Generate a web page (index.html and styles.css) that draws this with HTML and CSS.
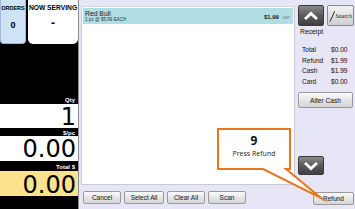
FILE: index.html
```html
<!DOCTYPE html>
<html>
<head>
<meta charset="utf-8">
<link rel="stylesheet" href="styles.css">
</head>
<body>
<div class="app">
  <aside class="side">
    <div class="top">
      <div class="orders"><div class="lbl">ORDERS</div><div class="val">0</div></div>
      <div class="serving"><div class="lbl">NOW SERVING</div><div class="val">-</div></div>
    </div>
    <div class="fill"></div>
    <div class="cap">Qty</div>
    <div class="num">1</div>
    <div class="cap">$/pc</div>
    <div class="num">0.00</div>
    <div class="cap">Total $</div>
    <div class="num total">0.00</div>
    <div class="foot"></div>
  </aside>
  <main class="main">
    <section class="left">
      <div class="list">
        <div class="row">
          <div class="item">
            <div class="name">Red Bull</div>
            <div class="detail">1 pc @ $5.99 EACH</div>
          </div>
          <div class="price">$1.99 <span class="tax">GST</span></div>
        </div>
      </div>
      <div class="actions">
        <button class="btn w38">Cancel</button>
        <button class="btn w40">Select All</button>
        <button class="btn w38">Clear All</button>
        <button class="btn w38">Scan</button>
      </div>
    </section>
    <section class="right">
      <div class="topbtns">
        <button class="dark"><svg width="16" height="10" viewBox="0 0 16 10"><polyline points="2,8 8,2.5 14,8" fill="none" stroke="#fff" stroke-width="3"/></svg></button>
        <button class="search"><svg width="8" height="14" viewBox="0 0 8 14"><line x1="1" y1="13" x2="6" y2="2" stroke="#222" stroke-width="1"/></svg><span>Search</span></button>
      </div>
      <div class="receipt">Receipt</div>
      <div class="totals">
        <div class="tl">Total</div><div class="tv">$0.00</div>
        <div class="tl">Refund</div><div class="tv">$1.99</div>
        <div class="tl">Cash</div><div class="tv">$1.99</div>
        <div class="tl">Card</div><div class="tv">$0.00</div>
      </div>
      <button class="btn alter">Alter Cash</button>
      <div class="grow"></div>
      <button class="dark down"><svg width="16" height="10" viewBox="0 0 16 10"><polyline points="2,2 8,7.5 14,2" fill="none" stroke="#fff" stroke-width="3"/></svg></button>
      <button class="btn refund">Refund</button>
    </section>
  </main>
  <div class="callout">
    <svg class="shape" width="355" height="209" viewBox="0 0 355 209">
      <path d="M218,129 H290 V169 H286 L321,198 L263,169 H218 Z" fill="#fff" stroke="#e8761c" stroke-width="2" stroke-linejoin="miter" stroke-miterlimit="10"/>
    </svg>
    <div class="bubble">
      <div class="step">9</div>
      <div class="msg">Press Refund</div>
    </div>
  </div>
</div>
</body>
</html>
```
FILE: styles.css
```css
* { box-sizing: border-box; }
html, body { margin: 0; padding: 0; }
body { width: 355px; height: 209px; overflow: hidden; font-family: "Liberation Sans", Arial, sans-serif; }
.app { position: relative; display: flex; width: 355px; height: 209px; }

.side { width: 79px; background: #000; display: flex; flex-direction: column; border-right: 1px solid #8c8c98; }
.top { display: flex; height: 44px; gap: 2px; }
.orders { width: 26px; background: #cfe3f7; border-radius: 0 0 4px 4px; border: 1px solid #9fb9d6; border-top: 0; text-align: center; }
.serving { flex: 1; background: #fff; border-radius: 0 0 5px 5px; text-align: center; }
.orders .lbl { font-size: 5.6px; font-weight: bold; margin-top: 5px; letter-spacing: -0.1px; }
.serving .lbl { font-size: 6.7px; font-weight: bold; margin-top: 4px; }
.orders .val { font-size: 9px; font-weight: bold; margin-top: 9px; }
.serving .val { font-size: 12px; font-weight: bold; margin-top: 5px; }
.fill { flex: 1; }
.cap { height: 10px; color: #fff; font-size: 6px; font-weight: bold; text-align: right; padding-right: 3px; line-height: 13px; }
.num { height: 24px; background: #fff; text-align: right; font-family: "DejaVu Sans", sans-serif; font-size: 24px; line-height: 27px; padding-right: 2px; color: #000; }
.cap + .num + .cap + .num { height: 25px; }
.cap:nth-of-type(5) { height: 8px; line-height: 10px; }
.num.total { height: 26px; background: #fbe38e; line-height: 29px; }
.foot { height: 13px; }

.main { flex: 1; background: #e6e6f6; display: flex; padding-left: 2px; }
.left { width: 214px; display: flex; flex-direction: column; padding-top: 6px; }
.list { height: 179px; background: #fff; border: 1px solid #c9c9da; border-top-color: #d6d6e4; padding: 1px; }
.row { display: flex; align-items: center; background: #b1dde7; height: 16px; padding: 0 3px 0 2px; }
.item { flex: 1; }
.name { font-size: 6.8px; color: #222; line-height: 7px; margin-top: 1px; }
.detail { font-size: 4.6px; color: #333; line-height: 6px; }
.price { font-size: 6px; font-weight: bold; color: #222; margin-top: 2px; }
.tax { font-size: 3.6px; font-weight: normal; color: #666; margin-left: 2px; }

.actions { display: flex; gap: 3px; margin-top: 6px; padding-left: 2px; }
.btn { height: 13px; padding: 0; font-family: "Liberation Sans", Arial, sans-serif; font-size: 6.5px; color: #111; background: linear-gradient(#fbfbfb, #e4e4e4 55%, #d6d6d6); border: 1px solid #9a9a9a; border-radius: 2px; }
.w38 { width: 38px; }
.w40 { width: 40px; }

.right { width: 57px; margin-left: 3px; display: flex; flex-direction: column; padding-top: 5px; }
.topbtns { display: flex; gap: 3px; }
.dark { width: 26px; height: 21px; padding: 0; border: 1px solid #3a3a3a; border-radius: 2px; background: linear-gradient(#8a8a8a, #5a5a5a 50%, #404040); display: flex; align-items: center; justify-content: center; }
.search { width: 27px; height: 21px; padding: 0 1px; border: 1px solid #8a8a8a; border-radius: 2px; background: linear-gradient(#f4f4f4, #cfcfcf); display: flex; align-items: center; justify-content: center; }
.search span { font-family: "Liberation Serif", serif; font-style: italic; font-size: 6px; color: #111; margin-left: -1px; }
.receipt { font-size: 6.8px; color: #111; margin-top: 2px; padding-left: 2px; height: 10px; }
.totals { display: grid; grid-template-columns: 29px auto; margin-top: 7px; padding-left: 4px; font-size: 6.6px; color: #111; line-height: 10.5px; }
.alter { width: 55px; height: 16px; margin-top: 5px; font-size: 6.6px; }
.grow { flex: 1; }
.dark.down { height: 19px; }
.refund { width: 41px; height: 13px; margin-top: 17px; margin-left: 15px; margin-bottom: 4px; }

.callout { position: absolute; inset: 0; pointer-events: none; }
.callout .shape { position: absolute; left: 0; top: 0; }
.bubble { position: absolute; left: 217px; top: 128px; width: 74px; height: 42px; text-align: center; font-family: "Open Sans", sans-serif; }
.step { font-size: 12px; font-weight: bold; color: #111; margin-top: 5px; line-height: 15px; }
.msg { font-size: 7px; color: #222; line-height: 10px; margin-top: 1px; }
```
